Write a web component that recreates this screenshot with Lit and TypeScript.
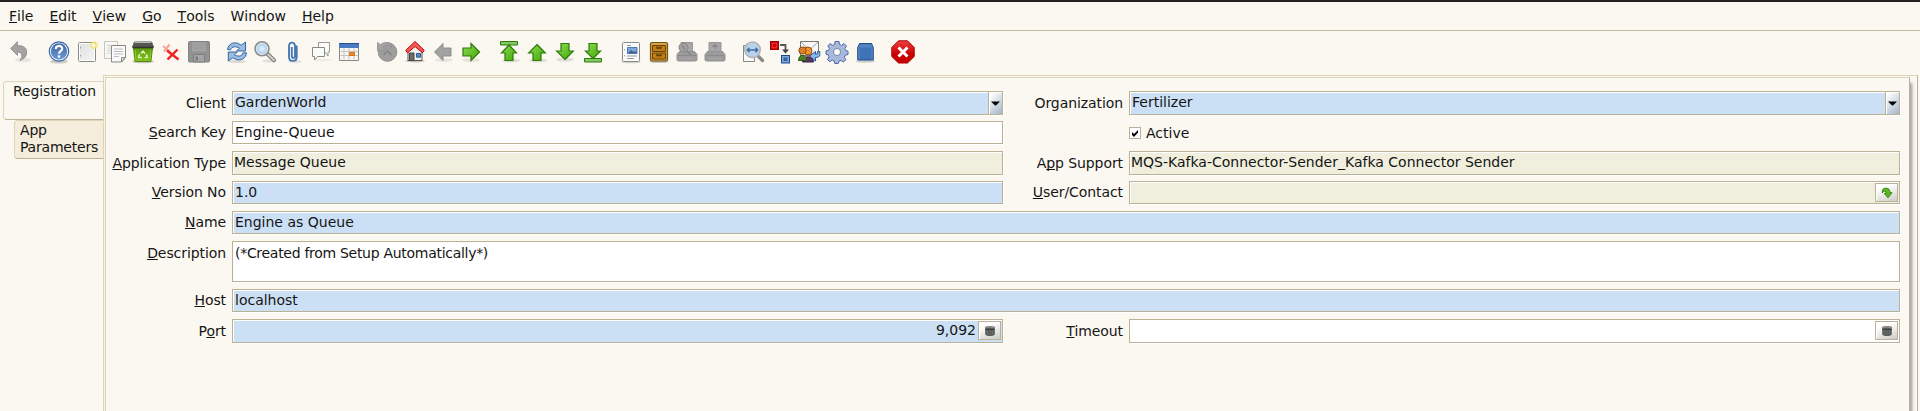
import { LitElement, html, svg, css, nothing } from "lit";
import { customElement, property } from "lit/decorators.js";
import { classMap } from "lit/directives/class-map.js";

/* "&" marks the letter that carries the mnemonic underline. */
const mnemonic = (text: string) => {
  const i = text.indexOf("&");
  return i < 0 ? html`${text}` : html`${text.slice(0, i)}<u>${text[i + 1]}</u>${text.slice(i + 2)}`;
};

const icons: Record<string, unknown> = {
  undo: svg`<ellipse cx="16" cy="20" rx="8" ry="2.500" fill="#000" opacity=".07"/>
    <path d="M3.500 8.500 10.500 1.500V5.500C17.500 5.500 20.500 8.500 19.500 14 19 17.500 16 19.500 13 20.500 15.500 17 16 12 10.500 12.200V15.500Z" fill="#a2a2a2" stroke="#8f8f8f" stroke-width=".8"/>`,
  help: svg`<ellipse cx="12" cy="21.500" rx="9" ry="2" fill="#000" opacity=".18"/><circle cx="12" cy="11.500" r="9.700" fill="#fff" stroke="#3465a4" stroke-width="1.200"/>
    <circle cx="12" cy="11.500" r="8.200" fill="url(#gBlueBall)"/><path d="M8.800 9C8.800 5 15.200 5 15.200 8.800 15.200 11.300 12 11.200 12 13.800" fill="none" stroke="#fff" stroke-width="2.200"/><rect x="10.900" y="15.300" width="2.300" height="2.300" fill="#fff"/>`,
  page: svg`<rect x="3.500" y="2.500" width="17" height="19" rx="1" fill="#fff" stroke="#888a85"/><rect x="5" y="4" width="14" height="16" fill="url(#gPaper)"/>
    <path d="M5.500 7v1.500M5.500 15v1.500" stroke="#999"/><circle cx="19" cy="5.300" r="3.800" fill="#f7e36b" opacity=".75"/><circle cx="19" cy="5.300" r="1.600" fill="#fffde0"/>`,
  copy: svg`<path d="M1.500 1.500h13v17h-13z" fill="#f7f7f5" stroke="#c6c6c3"/><path d="M4 5.500h8M4 8h8M4 10.500h5M4 13h5" stroke="#c9c9c9" stroke-width=".8"/>
    <path d="M8.500 5.500h14v12l-4 4.500h-10z" fill="#fafafa" stroke="#888a85"/><path d="M11 9h9M11 11.500h9M11 14h9M11 16.500h5" stroke="#b5b5b5" stroke-width=".9"/><path d="M22.500 17.500h-4V22Z" fill="#d8d8d6" stroke="#777" stroke-width=".8"/>`,
  trash: svg`<ellipse cx="12" cy="21.500" rx="11" ry="1.800" fill="#000" opacity=".2"/><path d="M2.500 8h19l-1.600 13.500H4.100Z" fill="url(#gTrash)" stroke="#538a0a"/><path d="M3.500 2h17l2 5H1.500Z" fill="#555753" stroke="#555"/>
    <path d="M3.800 2.500h16.400" stroke="#b8bab5"/><path d="M1.500 7.500h21" stroke="#333" stroke-width="1.600"/><path d="M4.500 10v9M19.500 10v9" stroke="#9fdb46" opacity=".6"/>
    <path d="m10 13.500 2-2.300 2 2.300M15.500 14.200l.8 3-2.600.5M8.500 14.300l-.8 2.900 3 .6" fill="none" stroke="#dff3bd" stroke-width="1.500"/>`,
  remove: svg`<path d="m4 6 7 5.500M10.500 4.500 5 11.500" stroke="#f8a5a0" stroke-width="2.200"/><path d="m8 10.500 11.500 9M18.500 9.500 8.500 19.500" stroke="#f12020" stroke-width="2.400"/>`,
  save: svg`<rect x="1.500" y="1.500" width="21" height="20.500" rx="1" fill="#929292" stroke="#858585"/><rect x="5" y="2.500" width="14" height="9" fill="#a3a3a3"/><path d="M6 5h12M6 8h12" stroke="#969696"/>
    <path d="M6.500 14.500h11V22h-11z" fill="#a5a5a5" stroke="#7f7f7f"/><path d="M8.500 16.500h2.500v4H8.500z" fill="#7c7c7c"/>`,
  refresh: svg`<ellipse cx="12" cy="21.500" rx="9" ry="1.600" fill="#000" opacity=".12"/>
    <path d="M2.500 9.500C3.500 4 8 2 12.500 3.200L16.200 5.200 20.500 2v9h-9l3-2.800C11.500 6.200 6.500 6 5.700 9.800Z" fill="#9bbbe0" stroke="#3465a4"/>
    <path d="M21.500 12.800c-.6 5.700-5.500 8-10 6.800L7.700 17.800 3.300 21v-9h9l-3 2.800c3.200 2 7.800 1.800 8.800-2Z" fill="#9bbbe0" stroke="#3465a4"/>`,
  search: svg`<ellipse cx="16" cy="21" rx="7" ry="1.500" fill="#000" opacity=".1"/><path d="m14.500 14 6.500 6.300" stroke="#777" stroke-width="4" stroke-linecap="round"/><path d="m15 14.500 6 5.800" stroke="#d0d0cc" stroke-width="2" stroke-linecap="round"/>
    <circle cx="9" cy="8.800" r="6.900" fill="#bcd7f2" stroke="#8b8d88" stroke-width="1.800"/><circle cx="9" cy="8.800" r="5.700" fill="url(#gLens)" stroke="#fff" stroke-width=".6"/>`,
  clip: svg`<ellipse cx="14" cy="21.500" rx="7" ry="1.200" fill="#000" opacity=".12"/><path d="M15.700 5.500v11.500c0 5.200-7.700 5.200-7.700 0V6.500c0-5 6-5.200 6-.3v9.800c0 2.500-3.200 2.500-3.200 0V7" fill="none" stroke="#4878b4" stroke-width="1.900"/>`,
  chat: svg`<ellipse cx="14" cy="20" rx="9" ry="1.200" fill="#000" opacity=".06"/><path d="M9.500 2.500h11v9.500h-1.500v4l-3-4H9.500z" fill="#fbfbfa" stroke="#999b96"/><path d="M3.500 7.500h12v9h-7l-3 3.500v-3.500h-2z" fill="#fafaf9" stroke="#888a85"/>`,
  calendar: svg`<path d="M2.500 4h19v16.500h-19z" fill="#f5f5f3" stroke="#888a85"/><path d="M2 3.500h20V8H2z" fill="#4a7abf"/><path d="M2 3.500h20" stroke="#27508d"/><path d="M7 8.500v11M12 8.500v11M17 8.500v11M3.500 11.500h17M3.500 15.500h17" stroke="#c4c4c2"/><path d="M12.500 12.500h5v3h-5z" fill="#f08a20" stroke="#d06800" stroke-width=".8"/>`,
  history: svg`<circle cx="12.500" cy="12" r="9.300" fill="#9e9e9e" stroke="#919191"/><path d="M2.500 2.500v8h8l-2.700-3C12 3.500 16 5 16.500 8 18 2.500 10 .5 5.500 4.700Z" fill="#a4a4a4" stroke="#8c8c8c" stroke-width=".8"/><path d="m8.500 15 4-4 4 4" fill="none" stroke="#7f7f7f" stroke-width="1.200"/>`,
  home: svg`<ellipse cx="12" cy="21" rx="10" ry="1.500" fill="#000" opacity=".2"/><path d="M5 10.500 12 4l7 6.500V20.500H5Z" fill="#f0f0ee" stroke="#555753"/><path d="M6.500 13h4.500v7.500H6.500z" fill="#6a6c67" stroke="#444"/><path d="M13.500 13.500h4v3.700h-4z" fill="#5b86bd" stroke="#345c94"/>
    <path d="M12 1.500 2.800 10.300 4.500 12.800 12 6.500 19.500 12.800 21.200 10.300Z" fill="#f35b5b" stroke="#c40000"/>`,
  left: svg`<ellipse cx="13" cy="20" rx="9" ry="2" fill="#000" opacity=".07"/><path d="M3.500 12 12 3.500V8h8v8h-8v4.500Z" fill="#a2a2a2" stroke="#8c8c8c"/>`,
  right: svg`<ellipse cx="12" cy="20" rx="9" ry="2" fill="#000" opacity=".08"/><path d="M20.500 12 12 3.500V8H4v8h8v4.500Z" fill="url(#gGreen)" stroke="#2f7a08" stroke-width="1.200"/>`,
  first: svg`<ellipse cx="14" cy="20.500" rx="9" ry="2" fill="#000" opacity=".1"/><path d="M3.500 1.500h17v3.500h-17z" fill="#82c964" stroke="#2f7a08"/><path d="M12 5 19.500 13h-3.500v7.500H8V13H4.500Z" fill="url(#gGreen)" stroke="#2f7a08" stroke-width="1.200"/>`,
  prev: svg`<ellipse cx="13" cy="20.500" rx="9" ry="2" fill="#000" opacity=".1"/><path d="M12 4.500 20.300 13H16v7.500H8V13H3.700Z" fill="url(#gGreen)" stroke="#2f7a08" stroke-width="1.200"/>`,
  next: svg`<ellipse cx="12" cy="19.500" rx="9" ry="2" fill="#000" opacity=".1"/><path d="M12 19.500 20.300 11H16V3.500H8V11H3.700Z" fill="url(#gGreen)" stroke="#2f7a08" stroke-width="1.200"/>`,
  last: svg`<path d="M3.500 18.500h17V22h-17z" fill="#82c964" stroke="#2f7a08"/><path d="M12 18.500 19.500 11H16V3.500H8V11H4.500Z" fill="url(#gGreen)" stroke="#2f7a08" stroke-width="1.200"/>`,
  report: svg`<ellipse cx="12" cy="22" rx="10" ry="1.300" fill="#000" opacity=".15"/><rect x="3.500" y="2.500" width="17" height="19" rx="1" fill="#fafafa" stroke="#888a85"/><path d="M5.500 9v1.500M5.500 15v1.500" stroke="#aaa"/><path d="M8 5.500h4M8 16h10M8 18.500h7" stroke="#999"/><path d="M8.500 7.500h9.500v6H8.500z" fill="#7aa6dc" stroke="#4b78b4"/><path d="m9 13 3-3 2.500 2 1.500-1 2 2Z" fill="#42648c"/>`,
  archive: svg`<ellipse cx="12" cy="21.800" rx="10" ry="1.300" fill="#000" opacity=".2"/><rect x="3.500" y="2.500" width="17" height="18.500" rx="1.500" fill="#d8a24a" stroke="#6e5210" stroke-width="1.200"/><path d="M5.500 5.500h13v6h-13zM5.500 13h13v6h-13z" fill="#c17d11" stroke="#6d4305"/><path d="M10 6.500v1.500h4V6.500M10 14v1.500h4V14" fill="none" stroke="#5a3a05" stroke-width="1.300"/>`,
  preview: svg`<path d="M6 2.500h11.500v9H6z" fill="#a8a8a8" stroke="#979797"/><path d="M4.500 11.500h15l2.500 3v5q0 1.500-1.500 1.500h-17Q2 21 2 19.500v-5Z" fill="#9c9c9c" stroke="#929292"/><path d="M3 15.500h18" stroke="#8a8a8a"/><path d="M6 18.500h12" stroke="#a8a8a8"/><circle cx="8.500" cy="7.500" r="4.500" fill="#a2a2a2" stroke="#868686"/><path d="m12 11 4 4M7 5.500l3 4" stroke="#868686" stroke-width="1.400"/>`,
  print: svg`<path d="M6 2.500h12v9H6z" fill="#a8a8a8" stroke="#979797"/><path d="M4.500 11.500h15l2.500 3v5q0 1.500-1.500 1.500h-17Q2 21 2 19.500v-5Z" fill="#9c9c9c" stroke="#929292"/><path d="M3 15.500h18" stroke="#8a8a8a"/><path d="M6 18.500h12" stroke="#a8a8a8"/><path d="M9.500 7 12 4.500 14.500 7M12 5v4" fill="none" stroke="#868686" stroke-width="1.200"/>`,
  zoom: svg`<path d="M2.500 5.500h11v16h-11z" fill="#fafafa" stroke="#888a85"/><path d="m16.500 15.500 5 5" stroke="#888a85" stroke-width="3.200" stroke-linecap="round"/><circle cx="11.500" cy="9.800" r="7.800" fill="#b9d3ec" stroke="#b1b4b2" stroke-width="1.500"/><path d="M6.500 10h10M8.500 7.800 6.300 10l2.200 2.200M14.500 7.800l2.200 2.200-2.200 2.200" fill="none" stroke="#416f9f" stroke-width="1.500"/>`,
  workflow: svg`<path d="M1 1h9v9H1z" fill="#a40000"/><path d="M2.500 2.500h6v6h-6z" fill="#ef2929"/><path d="M4 4h3v3H4z" fill="#c00"/><path d="M11 5h5.500v6" fill="none" stroke="#555753" stroke-width="1.800"/><path d="M13 9.500h7L16.500 13.500Z" fill="#444"/><path d="M12 15h9v8.500h-9z" fill="#204a87"/><path d="M13 16h7v6.500h-7z" fill="#7aa6dc"/><path d="M14.500 17.500h4v3.500h-4z" fill="#3465a4"/>`,
  request: svg`<path d="M3.500 1.500h18v14h-18z" fill="#f8f8f6" stroke="#777973"/><path d="m4 2 8.500 8L21 2" fill="none" stroke="#a0a29d"/><circle cx="11" cy="11" r="4" fill="#f0932b" stroke="#9c5208"/><path d="M5.500 22c0-7 11-7 11 0Z" fill="#5c3566" stroke="#3d2145"/><circle cx="5.500" cy="10.500" r="3.600" fill="#d9822b" stroke="#8c4c08"/><path d="M1.500 20.500c0-7 8-7 8 0Z" fill="#4e7d2c" stroke="#2d5712"/>
    <path d="M20.500 11.500h2.300v3.200q0 2.800-4.300 2.800v3.500L12.500 16l6-4.500v2.800q2 0 2-1.300Z" fill="#8db4e2" stroke="#29569b"/>`,
  process: svg`<g fill="#a9b9dc" stroke="#4a6ba8"><path d="M10 1.500h4l.5 3 2 .9 2.600-1.800 2.400 2.500L19.800 8.500l.9 2 2.300.7v3.300l-2.600.6-1 2.200 1.500 2.500-2.500 2.200-2.400-1.600-2 .8-.7 2.300H9.800l-.6-2.500-2-.9-2.500 1.600-2.300-2.300 1.600-2.500-.8-2-2.200-.7v-3.300l2.500-.6.9-2-1.600-2.400L5 3.600l2.500 1.700 2-.8Z"/></g><circle cx="12" cy="12" r="3.600" fill="#fbf8f1" stroke="#6f88b7"/>`,
  product: svg`<ellipse cx="12.500" cy="21.300" rx="10" ry="1.400" fill="#000" opacity=".18"/><path d="M6.500 3.500h12l1.800 4V20H4.700V7.500Z" fill="#3f73b5" stroke="#234f8a"/><path d="M6.500 4.500h12l1 3H5.500Z" fill="#5485c2"/><path d="M6 8v11.500M19 8v11.500" stroke="#6796cd" stroke-width=".8"/>`,
  exit: svg`<path d="M7.500.8h9l6.700 6.700v9L16.500 23h-9L.8 16.500v-9Z" fill="url(#gStop)" stroke="#a80000"/><path d="M7.500 7.500 16.500 16.500M16.500 7.500 7.500 16.500" stroke="#fff" stroke-width="3"/>`,
};

const toolbar: string[][] = [
  ["undo"],
  ["help", "page", "copy", "trash", "remove", "save"],
  ["refresh", "search", "clip", "chat", "calendar"],
  ["history", "home", "left", "right"],
  ["first", "prev", "next", "last"],
  ["report", "archive", "preview", "print"],
  ["zoom", "workflow", "request", "process", "product"],
  ["exit"],
];

const sharedFont = css`
  u {
    text-decoration: underline;
    text-decoration-thickness: 1px;
    text-underline-offset: 1px;
    text-decoration-skip-ink: none;
  }
`;

@customElement("form-field")
class FormField extends LitElement {
  @property() label = "";
  @property() value = "";
  @property() kind = "required";
  @property() button = "";
  @property() align = "";
  @property({ type: Boolean }) wide = false;
  @property({ type: Boolean }) tall = false;
  @property({ type: Boolean }) lowlabel = false;

  static styles = [
    sharedFont,
    css`
      :host { display: grid; grid-template-columns: 120px minmax(0, 1fr); column-gap: 6px; height: 23px; }
      :host([wide]) { grid-column: 1 / -1; }
      :host([tall]) { height: 41px; }
      .label { text-align: right; line-height: 23px; white-space: pre; letter-spacing: -0.08px; }
      .low { padding-top: 1px; }
      .box { display: flex; box-sizing: border-box; border: 1px solid #bab197; height: 100%; box-shadow: 1px 1px 0 #fff, inset 1px 1px 0 #fff; }
      .required { background: #cce0f5; }
      .readonly { background: #f0efde; }
      .plain { background: #fff; }
      .text { flex: 1; padding-left: 2px; line-height: 21px; white-space: pre; }
      .inset { padding-left: 1px; }
      .client { padding-left: 2px; }
      .tall { line-height: 23px; letter-spacing: -0.29px; }
      .right { text-align: right; padding-right: 1px; }
      .arrow { width: 13px; border-left: 1px solid #bab197; box-shadow: inset 1px 1px 0 #fff; background: linear-gradient(135deg, #fff 10%, #a9b9cc 95%); display: grid; place-items: center; }
      .btn { box-sizing: border-box; width: 23px; height: 19px; margin: 1px; border: 1px solid #bab197; box-shadow: inset 1px 1px 0 #fff; background: linear-gradient(160deg, #fff 25%, #cfccc6); display: grid; place-items: center; }
      svg { display: block; }
    `,
  ];

  private renderButton() {
    if (this.button === "arrow")
      return html`<span class="arrow"><svg width="9" height="5" viewBox="0 0 9 5"><path d="M0 .5h9L5 4.500H4Z" fill="#000"/></svg></span>`;
    if (this.button === "zoom")
      return html`<span class="btn"><svg width="12" height="12" viewBox="0 0 12 12"><path d="M1.300 6C.8 2.500 2.500 1 5 1.200 7.500 1.200 9 2.500 9 5.700h2L7 10.800 3.300 6.500h2C5.300 4.500 2.500 3 1.300 6Z" fill="#5cb820" stroke="#2f7a08" stroke-width=".9"/></svg></span>`;
    if (this.button === "calc")
      return html`<span class="btn"><svg width="12" height="12" viewBox="0 0 12 12"><path d="M1.200 2.500Q1.200 1 6 1t4.800 1.500v6.500Q10.500 11 6 11T1.200 9Z" fill="#5a5d59"/><path d="M2 2.300q4-1 8 0" fill="none" stroke="#9a9d97" stroke-width="1.300"/><path d="M1.300 4.500h9.400" stroke="#3a3f3f"/><path d="M3.500 5.500v4M6 6v4M8.500 5.500v4" stroke="#747873" stroke-width=".6"/></svg></span>`;
    return nothing;
  }

  render() {
    const inset = this.kind === "readonly" || this.button === "arrow";
    return html`
      <span class=${classMap({ label: true, low: this.lowlabel || this.tall })}>${mnemonic(this.label)}</span>
      <span class=${"box " + this.kind}>
        <span class=${classMap({ text: true, inset, client: this.button === "arrow", tall: this.tall, right: this.align === "right" })}>${this.value}</span>
        ${this.renderButton()}
      </span>`;
  }
}

@customElement("app-root")
class AppRoot extends LitElement {
  static styles = [
    sharedFont,
    css`
      :host { display: flex; flex-direction: column; box-sizing: border-box; height: 411px; overflow: hidden; background: #fbf8f1; border-top: 2px solid #262224; color: #151515; font: 14px "DejaVu Sans", sans-serif; }
      .menu { display: flex; gap: 16px; padding-left: 9px; height: 28px; line-height: 28px; border-bottom: 1px solid #c0b79e; font-kerning: none; }
      .tools { display: flex; gap: 10px; padding-left: 5px; height: 42px; align-items: center; }
      .group { display: flex; gap: 4px; padding: 0 2px; }
      .group:first-child { padding-right: 4px; }
      .icon { display: block; width: 24px; height: 24px; }
      .defs { position: absolute; }
      .main { display: flex; flex: 1; padding-top: 2px; }
      .tabs { width: 103px; padding-top: 6px; display: flex; flex-direction: column; align-items: flex-end; }
      .tab { box-sizing: border-box; height: 39px; border: 1px solid #e0d4b8; border-right: 0; border-bottom-color: #bab197; border-radius: 4px 0 0 4px; line-height: 17px; letter-spacing: -0.12px; }
      .active { width: 100px; padding: 1px 0 0 9px; }
      .child { width: 89px; padding: 1px 0 0 5px; background: #f4eddc; letter-spacing: -0.2px; }
      .frame { flex: 1; display: flex; border: solid #e0d4b8; border-width: 1px 0 0 1px; margin-right: 2px; border-right: 1px solid #bab197; padding: 1px 7px 0 1px; }
      .panel { flex: 1; box-sizing: border-box; border: solid #e0d4b8; border-width: 1px 0 0 1px; border-right: 1px solid #bab197; box-shadow: 2px 6px 3px rgba(60, 60, 70, .5); background: #fbf8f1; padding: 13px 9px 0 0; }
      .form { display: grid; grid-template-columns: 897px 1fr; row-gap: 7px; }
      .check { display: flex; align-items: center; gap: 5px; padding-left: 126px; height: 23px; }
      .tick { box-sizing: border-box; width: 12px; height: 12px; border: 1px solid #bab197; background: #fff; }
      .tick svg { display: block; }
    `,
  ];

  render() {
    return html`
      <svg class="defs" width="0" height="0">
        <defs>
          <linearGradient id="gGreen" x1="0" y1="0" x2="1" y2="1"><stop offset="0" stop-color="#8bdc55"/><stop offset="1" stop-color="#42a806"/></linearGradient>
          <linearGradient id="gPaper" x1="0" y1="0" x2="1" y2="1"><stop offset="0" stop-color="#e0e0e0"/><stop offset="1" stop-color="#f4f4f4"/></linearGradient>
          <linearGradient id="gTrash" x1="0" y1="0" x2="0" y2="1"><stop offset="0" stop-color="#5c9a0c"/><stop offset="1" stop-color="#86c41e"/></linearGradient>
          <linearGradient id="gStop" x1="0" y1="0" x2="0" y2="1"><stop offset="0" stop-color="#f04040"/><stop offset=".6" stop-color="#c80000"/></linearGradient>
          <linearGradient id="gBlueBall" x1="0" y1="0" x2="0" y2="1"><stop offset="0" stop-color="#3d64a6"/><stop offset="1" stop-color="#6f9bd2"/></linearGradient>
          <radialGradient id="gLens"><stop offset="0" stop-color="#e6f2fc"/><stop offset="1" stop-color="#a9cbed"/></radialGradient>
        </defs>
      </svg>
      <nav class="menu">
        ${["&File", "&Edit", "&View", "&Go", "&Tools", "Window", "&Help"].map((m) => html`<span>${mnemonic(m)}</span>`)}
      </nav>
      <div class="tools">
        ${toolbar.map((g) => html`<div class="group">${g.map((n) => html`<svg class="icon" viewBox="0 0 24 24">${icons[n]}</svg>`)}</div>`)}
      </div>
      <div class="main">
        <div class="tabs">
          <div class="tab active">Registration</div>
          <div class="tab child">App<br />Parameters</div>
        </div>
        <div class="frame">
          <div class="panel">
            <div class="form">
              <form-field label="Client" value="GardenWorld" button="arrow" lowlabel></form-field>
              <form-field label="Organization" value="Fertilizer" button="arrow" lowlabel></form-field>
              <form-field label="&Search Key" value="Engine-Queue" kind="plain"></form-field>
              <div class="check">
                <span class="tick"><svg width="10" height="10" viewBox="0 0 10 10"><path d="M2 4v3l2 2 4-4.500V2L4 6Z" fill="#000"/></svg></span>Active
              </div>
              <form-field label="&Application Type" value="Message Queue" kind="readonly" lowlabel></form-field>
              <form-field label="A&pp Support" value="MQS-Kafka-Connector-Sender_Kafka Connector Sender" kind="readonly" lowlabel></form-field>
              <form-field label="&Version No" value="1.0"></form-field>
              <form-field label="&User/Contact" kind="readonly" button="zoom"></form-field>
              <form-field wide label="&Name" value="Engine as Queue"></form-field>
              <form-field wide tall label="&Description" value="(*Created from Setup Automatically*)" kind="plain"></form-field>
              <form-field wide label="&Host" value="localhost"></form-field>
              <form-field label="P&ort" value="9,092" button="calc" align="right" lowlabel></form-field>
              <form-field label="&Timeout" kind="plain" button="calc" lowlabel></form-field>
            </div>
          </div>
        </div>
      </div>`;
  }
}
